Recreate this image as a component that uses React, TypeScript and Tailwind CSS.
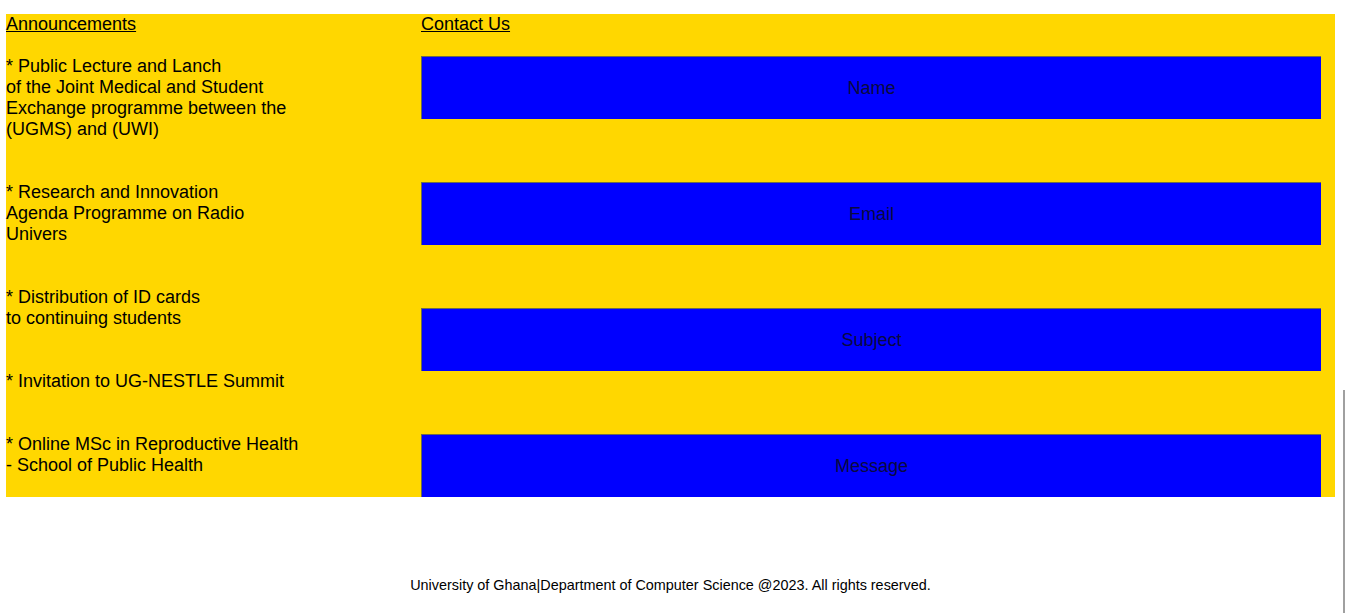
import React from "react";

const items: string[][] = [
  ["* Public Lecture and Lanch", "of the Joint Medical and Student", "Exchange programme between the", "(UGMS) and (UWI)"],
  ["* Research and Innovation", "Agenda Programme on Radio", "Univers"],
  ["* Distribution of ID cards", "to continuing students"],
  ["* Invitation to UG-NESTLE Summit"],
  ["* Online MSc in Reproductive Health", "- School of Public Health"],
];

const fields = ["Name", "Email", "Subject", "Message"];

export default function App() {
  return (
    <div className="relative h-[613px] overflow-hidden bg-white text-black" style={{ fontFamily: '"Liberation Sans", Arial, sans-serif' }}>
      <div className="pt-[14px] pl-[6px] pr-[12px]">
        <div className="flex bg-[#ffd700] text-[18px] leading-[21px]">
          <div className="w-[415px] flex flex-col">
            <a className="underline self-start">Announcements</a>
            {items.map((lines, i) => (
              <div key={i} className={i === 0 ? "mt-[21px]" : "mt-[42px]"}>
                {lines.map((l, j) => (
                  <div key={j}>{l}</div>
                ))}
              </div>
            ))}
          </div>
          <div className="flex-1 pr-[14px] flex flex-col">
            <a className="underline self-start">Contact Us</a>
            <div className="mt-[21px] flex flex-col gap-[63px]">
              {fields.map((f) => (
                <div
                  key={f}
                  className="h-[63px] bg-[#0000ff] border-t border-l border-[#6b6b50] border-b-black border-r-black flex items-center justify-center text-[#0a0a40]"
                >
                  {f}
                </div>
              ))}
            </div>
          </div>
        </div>
        <div className="mt-[80px] text-center text-[14.4px] leading-[16px]">
          University of Ghana|Department of Computer Science @2023. All rights reserved.
        </div>
      </div>
      <div className="absolute right-[2px] top-[390px] bottom-0 w-[2px] bg-[#a0a0a0]" />
    </div>
  );
}
